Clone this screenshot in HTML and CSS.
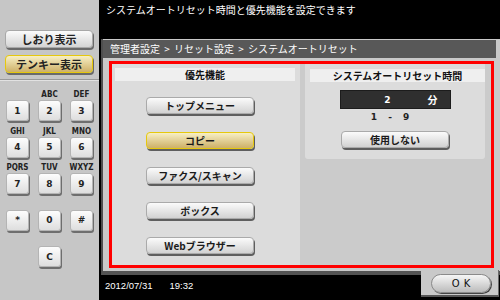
FILE: index.html
```html
<!DOCTYPE html>
<html lang="ja">
<head>
    <meta charset="UTF-8">
    <meta name="viewport" content="width=device-width, initial-scale=1.0">
    <title>システムオートリセット</title>
    <link rel="stylesheet" href="styles.css">
</head>
<body>

    <div class="screen">

        <!-- Panel kiri: tombol tampilan + tenkey -->
        <aside class="side">
            <button class="side-btn">しおり表示</button>
            <button class="side-btn is-active">テンキー表示</button>
            <div class="side-rule"></div>

            <div class="keypad">
                <div class="key"><span class="key-label"></span><button class="key-btn">1</button></div>
                <div class="key"><span class="key-label">ABC</span><button class="key-btn">2</button></div>
                <div class="key"><span class="key-label">DEF</span><button class="key-btn">3</button></div>
                <div class="key"><span class="key-label">GHI</span><button class="key-btn">4</button></div>
                <div class="key"><span class="key-label">JKL</span><button class="key-btn">5</button></div>
                <div class="key"><span class="key-label">MNO</span><button class="key-btn">6</button></div>
                <div class="key"><span class="key-label">PQRS</span><button class="key-btn">7</button></div>
                <div class="key"><span class="key-label">TUV</span><button class="key-btn">8</button></div>
                <div class="key"><span class="key-label">WXYZ</span><button class="key-btn">9</button></div>
                <div class="key"><span class="key-label"></span><button class="key-btn">*</button></div>
                <div class="key"><span class="key-label"></span><button class="key-btn">0</button></div>
                <div class="key"><span class="key-label"></span><button class="key-btn">#</button></div>
                <div class="key key-empty"></div>
                <div class="key"><span class="key-label"></span><button class="key-btn">C</button></div>
            </div>
        </aside>

        <main class="main">
            <div class="title">システムオートリセット時間と優先機能を設定できます</div>

            <section class="frame">
                <div class="crumb">管理者設定 &gt; リセット設定 &gt; システムオートリセット</div>

                <div class="settings">
                    <!-- Kolom prioritas fungsi -->
                    <div class="col col-priority">
                        <div class="col-head">優先機能</div>
                        <div class="choice-list">
                            <button class="btn">トップメニュー</button>
                            <button class="btn is-active">コピー</button>
                            <button class="btn">ファクス/スキャン</button>
                            <button class="btn">ボックス</button>
                            <button class="btn">Webブラウザー</button>
                        </div>
                    </div>

                    <!-- Kolom waktu reset -->
                    <div class="col col-timer">
                        <div class="col-head">システムオートリセット時間</div>
                        <div class="timer-display">
                            <span class="timer-value">2</span>
                            <span class="timer-unit">分</span>
                        </div>
                        <div class="timer-range">1 - 9</div>
                        <button class="btn btn-wide">使用しない</button>
                    </div>
                </div>
            </section>

            <footer class="status">
                <span class="clock">2012/07/31<span class="clock-time">19:32</span></span>
                <div class="ok-tab">
                    <button class="ok-btn">OK</button>
                </div>
            </footer>
        </main>

    </div>

</body>
</html>
```

FILE: styles.css
```css
/* Dasar halaman */
body {
    margin: 0;
    background: #000;
    font-family: "Noto Sans CJK JP", "DejaVu Sans", sans-serif;
    font-size: 10px;
}

button {
    font-family: inherit;
    padding: 0;
    cursor: pointer;
}

.screen {
    display: flex;
    width: 500px;
    height: 300px;
    overflow: hidden;
}

/* Panel kiri */
.side {
    width: 94px;
    flex-shrink: 0;
    background: #c6c6c6;
    padding: 30px 0 0 5px;
    display: flex;
    flex-direction: column;
}

.side-btn {
    width: 88px;
    height: 18px;
    margin-bottom: 7px;
    font-size: 11px;
    font-weight: bold;
    color: #222;
    background: linear-gradient(#fbfbfb, #d4d4d4);
    border: 1px solid #a8a8a8;
    border-radius: 4px;
    box-shadow: 1px 2px 0 #6a6a6a;
}

.side-btn.is-active,
.btn.is-active {
    background: linear-gradient(#f7efc4, #cdb068);
    border-color: #e6c80c;
}

.side-rule {
    width: 99px;
    margin: -1px 0 0 -5px;
    border-top: 1px solid #9a9a9a;
    border-bottom: 1px solid #e2e2e2;
}

/* Tenkey */
.keypad {
    display: grid;
    grid-template-columns: repeat(3, 23px);
    column-gap: 9px;
    row-gap: 4.5px;
    margin: 8px 0 0 1px;
}

.key {
    display: flex;
    flex-direction: column;
    align-items: center;
}

.key-label {
    height: 11px;
    line-height: 11px;
    font-family: "DejaVu Sans", sans-serif;
    font-size: 8px;
    font-weight: bold;
    font-stretch: condensed;
    color: #222;
    white-space: nowrap;
}

.key-btn {
    width: 23px;
    height: 21px;
    font-family: "DejaVu Sans", sans-serif;
    font-size: 9px;
    font-weight: bold;
    color: #222;
    background: linear-gradient(#fdfdfd, #dedede);
    border: 1px solid #b4b4b4;
    border-radius: 3px;
    box-shadow: 1px 2px 0 #6e6e6e;
}

/* Area utama */
.main {
    flex: 1;
    display: flex;
    flex-direction: column;
    padding-left: 2px;
}

.title {
    height: 35px;
    padding: 4px 0 0 5px;
    color: #fff;
    font-size: 10px;
    line-height: 12px;
}

.frame {
    width: 393px;
    background: #c9c9c9;
    border-left: 2px solid #4e4e4e;
    border-bottom: 4px solid #545454;
    padding: 1px 4px 3px 0;
}

.crumb {
    height: 18px;
    line-height: 18px;
    padding-left: 7px;
    background: #585858;
    color: #fff;
    font-size: 10px;
    word-spacing: 2px;
    white-space: nowrap;
}

/* Kotak merah pengaturan */
.settings {
    display: flex;
    align-items: flex-start;
    gap: 5px;
    height: 201px;
    margin: 3px 2px 0 6px;
    border: 3px solid #ff0000;
    background: #cbcbcb;
}

.col {
    display: flex;
    flex-direction: column;
    background: #dcdcdc;
}

.col-priority {
    width: 188px;
    height: 201px;
}

.col-timer {
    width: 180px;
    height: 95px;
    align-items: center;
    border-radius: 0 0 3px 3px;
}

.col-head {
    height: 13px;
    line-height: 13px;
    background: #efefef;
    font-weight: bold;
    color: #111;
    text-align: center;
    white-space: nowrap;
}

.col-priority .col-head {
    margin: 4px 5px 0 3px;
}

.col-timer .col-head {
    align-self: stretch;
    margin: 5px 0 0 5px;
}

.choice-list {
    display: flex;
    flex-direction: column;
    gap: 18px;
    margin: 16px 0 0 34px;
}

.btn {
    width: 108px;
    height: 17px;
    font-size: 10px;
    font-weight: bold;
    color: #1a1a1a;
    background: linear-gradient(#fbfbfb, #d2d2d2);
    border: 1px solid #aaaaaa;
    border-radius: 4px;
    box-shadow: 1px 2px 0 #5e5e5e;
}

.btn-wide {
    margin-top: 8px;
}

.timer-display {
    display: flex;
    justify-content: flex-end;
    align-items: center;
    width: 97px;
    height: 17px;
    margin-top: 8px;
    padding-right: 12px;
    background: #2f2f2f;
    border: 1px solid #1c1c1c;
    color: #fff;
    font-weight: bold;
}

.timer-value {
    margin-right: 37px;
    font-family: "DejaVu Sans", sans-serif;
    font-size: 9px;
}

.timer-range {
    margin: 3px 10px 0 0;
    line-height: 11px;
    font-family: "DejaVu Sans", sans-serif;
    font-size: 9px;
    font-weight: bold;
    word-spacing: 8px;
    color: #222;
}

/* Baris status bawah */
.status {
    display: flex;
    align-items: flex-start;
}

.clock {
    flex: 1;
    padding: 5px 0 0 4px;
    line-height: 12px;
    font-family: "Liberation Sans", sans-serif;
    font-size: 9.5px;
    color: #fff;
}

.clock-time {
    margin-left: 17px;
}

.ok-tab {
    width: 77px;
    height: 25px;
    margin: -5px 1px 0 0;
    background: #c9c9c9;
    border-right: 1px solid #6a6a6a;
    border-bottom: 2px solid #555;
}

.ok-btn {
    width: 60px;
    height: 19px;
    margin: 4px 0 0 10px;
    font-family: "DejaVu Sans", sans-serif;
    font-size: 10px;
    letter-spacing: 4px;
    text-indent: 4px;
    color: #111;
    background: linear-gradient(#f6f6f6, #bcbcbc);
    border: 1px solid #8a8a8a;
    border-radius: 10px;
    box-shadow: 1px 1px 0 #444;
}
```
